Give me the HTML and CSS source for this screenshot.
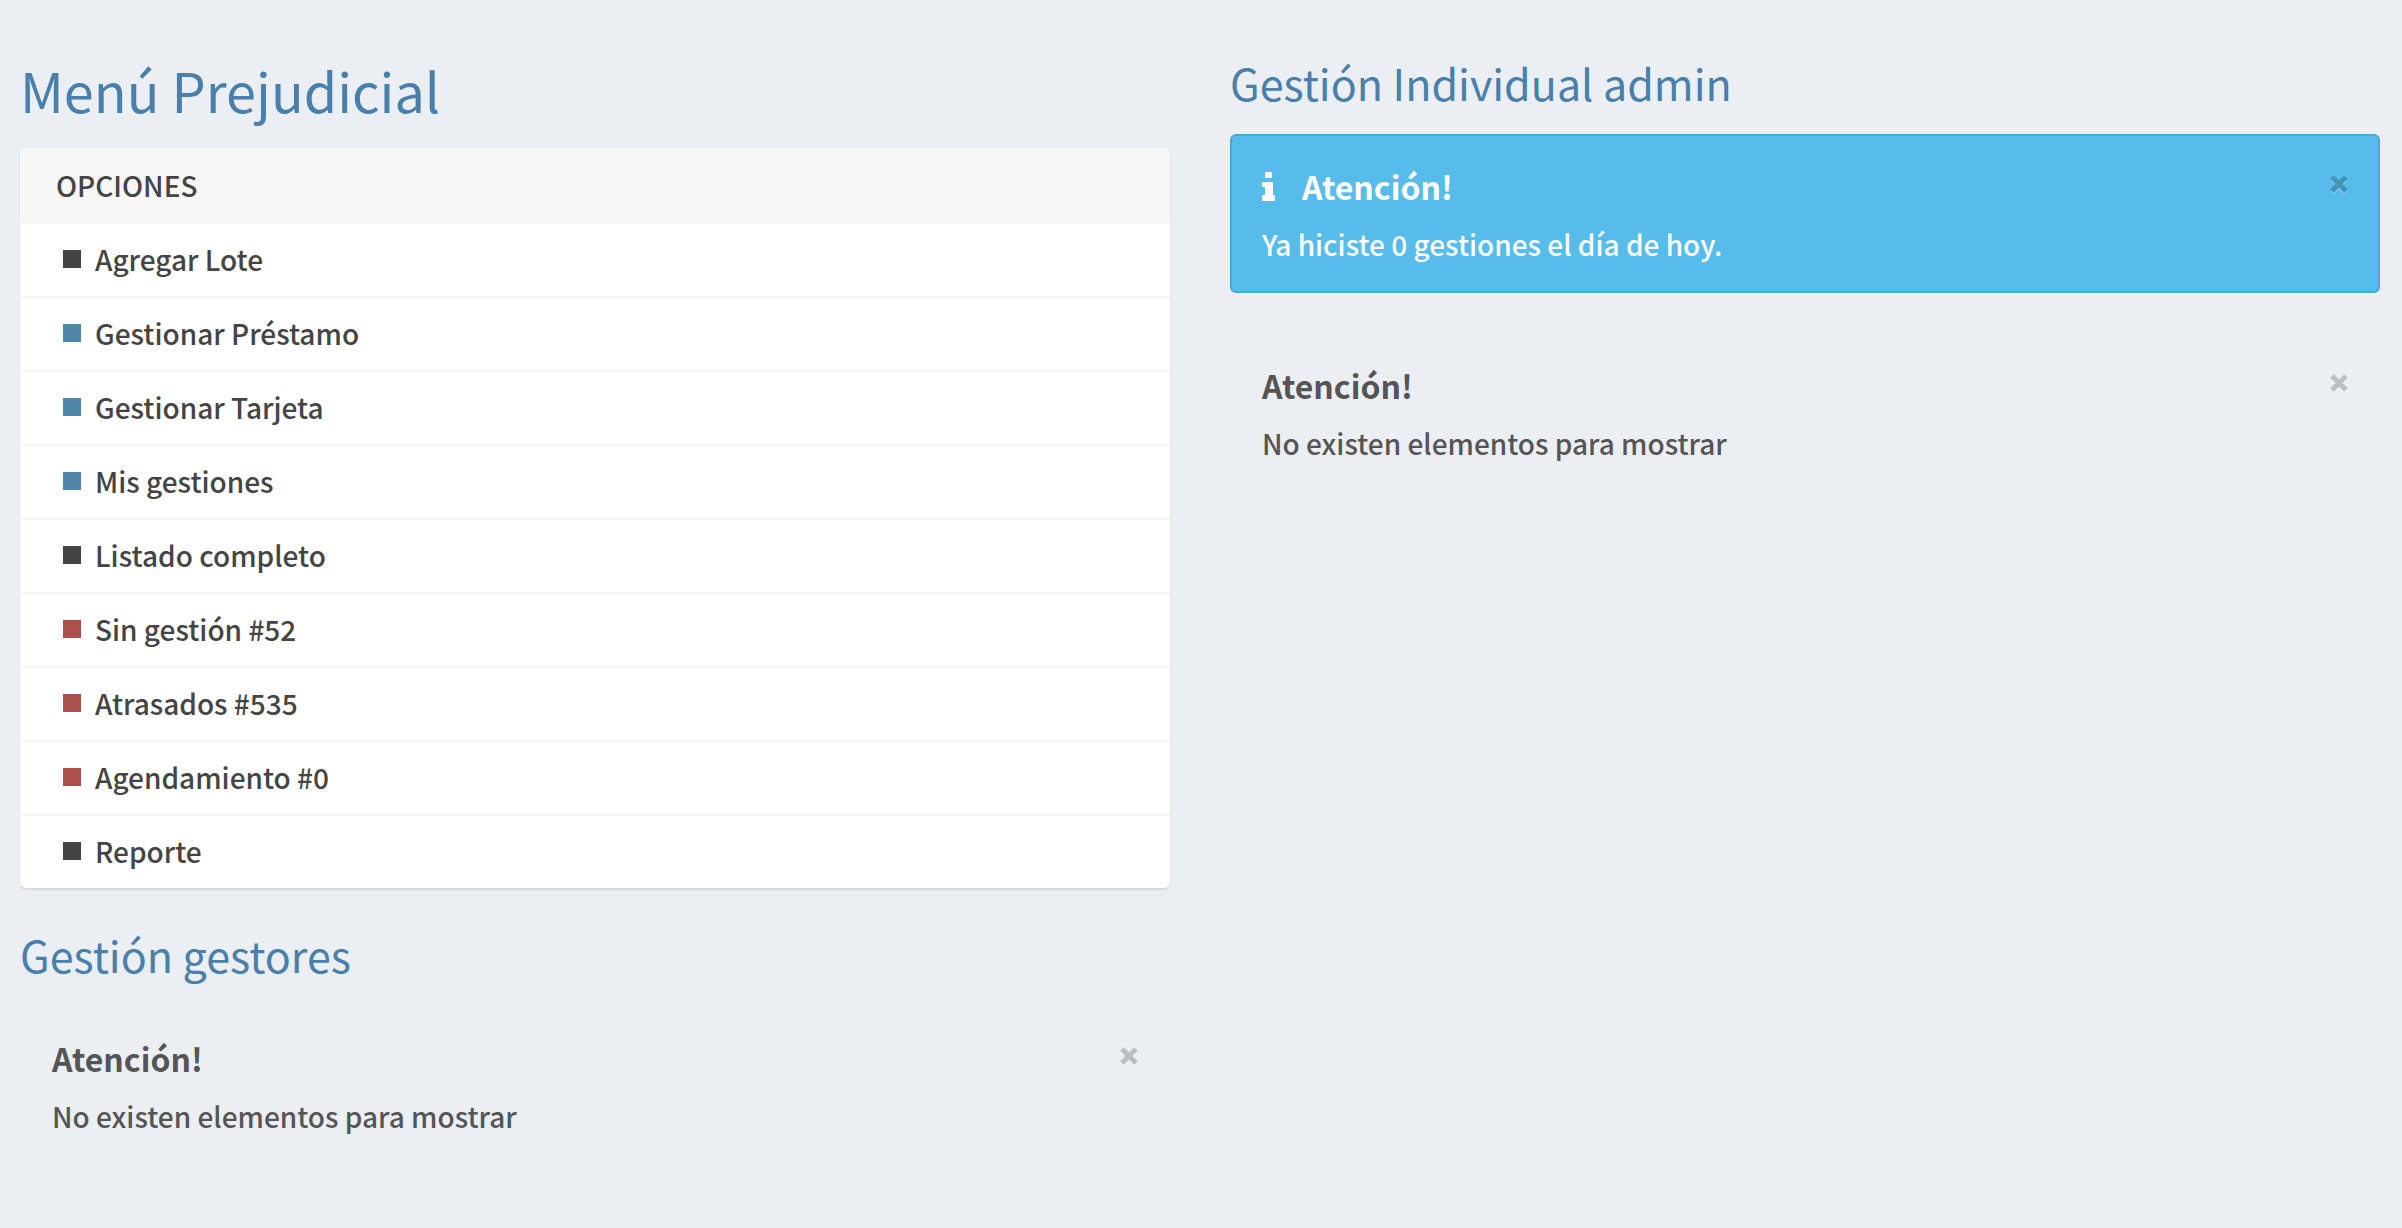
FILE: index.html
```html
<!DOCTYPE html>
<html lang="es">
<head>
<meta charset="utf-8">
<title>Menú Prejudicial</title>
<link rel="stylesheet" href="styles.css">
</head>
<body>
<main class="row">
  <section class="col">
    <h1 class="page-title">Menú Prejudicial</h1>
    <nav class="menu" aria-labelledby="menu-title">
      <h2 class="menu-title" id="menu-title">OPCIONES</h2>
      <ul class="menu-list">
        <li><a class="menu-link" href="#"><span class="mark"></span>Agregar Lote</a></li>
        <li><a class="menu-link" href="#"><span class="mark mark-blue"></span>Gestionar Préstamo</a></li>
        <li><a class="menu-link" href="#"><span class="mark mark-blue"></span>Gestionar Tarjeta</a></li>
        <li><a class="menu-link" href="#"><span class="mark mark-blue"></span>Mis gestiones</a></li>
        <li><a class="menu-link" href="#"><span class="mark"></span>Listado completo</a></li>
        <li><a class="menu-link" href="#"><span class="mark mark-red"></span>Sin gestión #52</a></li>
        <li><a class="menu-link" href="#"><span class="mark mark-red"></span>Atrasados #535</a></li>
        <li><a class="menu-link" href="#"><span class="mark mark-red"></span>Agendamiento #0</a></li>
        <li><a class="menu-link" href="#"><span class="mark"></span>Reporte</a></li>
      </ul>
    </nav>
    <h2 class="section-title">Gestión gestores</h2>
    <div class="alert">
      <div class="alert-body">
        <h3 class="alert-title">Atención!</h3>
        <p class="alert-text">No existen elementos para mostrar</p>
      </div>
      <button class="close" type="button" aria-label="Cerrar"><svg width="18" height="18" viewBox="0 0 18 18"><path d="M2 2L16 16M16 2L2 16"/></svg></button>
    </div>
  </section>
  <section class="col">
    <h2 class="section-title">Gestión Individual admin</h2>
    <div class="alert alert-info">
      <div class="alert-body">
        <h3 class="alert-title"><svg class="info-icon" width="14" height="29" viewBox="0 0 14 29"><path d="M4 0h5q1 0 1 1v4q0 1-1 1H4q-1 0-1-1V1q0-1 1-1zM1 10h8q2 0 2 1v12h1q1 0 1 1v4q0 1-1 1H1q-1 0-1-1v-4q0-1 1-1h2v-8H1q-1 0-1-1v-3q0-1 1-1z"/></svg>Atención!</h3>
        <p class="alert-text">Ya hiciste 0 gestiones el día de hoy.</p>
      </div>
      <button class="close" type="button" aria-label="Cerrar"><svg width="18" height="18" viewBox="0 0 18 18"><path d="M2 2L16 16M16 2L2 16"/></svg></button>
    </div>
    <div class="alert">
      <div class="alert-body">
        <h3 class="alert-title">Atención!</h3>
        <p class="alert-text">No existen elementos para mostrar</p>
      </div>
      <button class="close" type="button" aria-label="Cerrar"><svg width="18" height="18" viewBox="0 0 18 18"><path d="M2 2L16 16M16 2L2 16"/></svg></button>
    </div>
  </section>
</main>
</body>
</html>
```
FILE: styles.css
```css
* { box-sizing: border-box; margin: 0; padding: 0; }
body {
  background: #ebeff4;
  color: #444;
  font-family: "Noto Sans CJK JP", "Noto Sans CJK SC", sans-serif;
  font-size: 28px;
  font-weight: 500;
  line-height: 44px;
}
.row { display: grid; grid-template-columns: 1fr 1fr; gap: 60px; padding: 60px 22px 40px 20px; }
.page-title { color: #487fab; font-size: 54px; font-weight: 400; line-height: 60px; margin-bottom: 28px; }
.section-title { color: #487fab; font-size: 43px; font-weight: 400; line-height: 44px; margin-bottom: 30px; }
.menu { background: #fff; border-radius: 6px; box-shadow: 0 2px 2px rgba(0,0,0,.1); overflow: hidden; margin-bottom: 44px; }
.menu-title { background: #f7f7f7; font-size: 28px; font-weight: 500; line-height: 44px; padding: 15px 36px; }
.menu-list { list-style: none; }
.menu-list li { border-top: 2px solid #f4f4f4; }
.menu-link { display: flex; align-items: center; gap: 14px; color: #444; text-decoration: none; padding: 13px 43px 15px; }
.mark { width: 18px; height: 18px; background: #444; margin-bottom: 1px; }
.mark-blue { background: #4f86aa; }
.mark-red { background: #ab504d; }
.alert { display: flex; justify-content: space-between; align-items: flex-start; border: 2px solid transparent; border-radius: 6px; color: #555; padding: 30px 30px 25px; margin-bottom: 40px; }
.alert-info { background: #57bce9; border-color: #4aa8d6; color: #fff; }
.alert-title { display: flex; align-items: center; font-size: 32px; font-weight: 700; line-height: 40px; margin-bottom: 16px; }
.info-icon { fill: currentColor; margin-right: 26px; }
.close { border: 0; background: none; opacity: .2; line-height: 0; margin-top: 9px; cursor: pointer; }
.close svg { stroke: #000; stroke-width: 5; filter: drop-shadow(0 2px 0 #fff); }
```
